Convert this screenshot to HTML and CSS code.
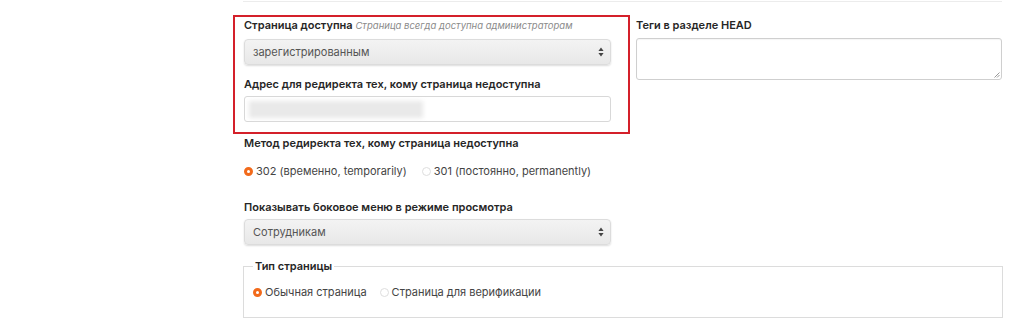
FILE: index.html
```html
<!DOCTYPE html>
<html lang="ru">
<head>
    <meta charset="UTF-8">
    <meta name="viewport" content="width=device-width, initial-scale=1.0">
    <title>Настройки страницы</title>
    <link rel="stylesheet" href="styles.css">
</head>
<body>
    <div class="page">
        <div class="topline"></div>
        <div class="form">
            <div class="col">
                <div class="highlight">
                    <div class="field">
                        <div class="label">Страница доступна <em class="hint">Страница всегда доступна администраторам</em></div>
                        <div class="select">
                            <span>зарегистрированным</span>
                            <svg class="arrows" width="6" height="10" viewBox="0 0 6 10"><path d="M3 0.5L5.6 4H0.4z M3 9.5L0.4 6H5.6z" fill="#444"/></svg>
                        </div>
                    </div>
                    <div class="field">
                        <div class="label">Адрес для редиректа тех, кому страница недоступна</div>
                        <div class="input"><span class="blurred"></span></div>
                    </div>
                </div>

                <div class="field after-box">
                    <div class="label">Метод редиректа тех, кому страница недоступна</div>
                    <div class="radios">
                        <label class="radio"><span class="dot checked"></span>302 (временно, temporarily)</label>
                        <label class="radio"><span class="dot"></span>301 (постоянно, permanently)</label>
                    </div>
                </div>

                <div class="field">
                    <div class="label">Показывать боковое меню в режиме просмотра</div>
                    <div class="select">
                        <span>Сотрудникам</span>
                        <svg class="arrows" width="6" height="10" viewBox="0 0 6 10"><path d="M3 0.5L5.6 4H0.4z M3 9.5L0.4 6H5.6z" fill="#444"/></svg>
                    </div>
                </div>
            </div>

            <div class="col right">
                <div class="label">Теги в разделе HEAD</div>
                <div class="textarea">
                    <svg class="grip" width="7" height="7" viewBox="0 0 7 7"><path d="M6.5 1.5L1.5 6.5 M6.5 4L4 6.5" stroke="#999" stroke-width="1"/></svg>
                </div>
            </div>
        </div>

        <fieldset class="type">
            <legend>Тип страницы</legend>
            <div class="radios">
                <label class="radio"><span class="dot checked"></span>Обычная страница</label>
                <label class="radio"><span class="dot"></span>Страница для верификации</label>
            </div>
        </fieldset>
    </div>
</body>
</html>
```

FILE: styles.css
```css
body {
    margin: 0;
    background: #fff;
    font-family: Inter, "Noto Sans", Arial, sans-serif;
    font-size: 11px;
    line-height: 14px;
    color: #333;
}

.page {
    margin-left: 243px;
    width: 760px;
    padding-top: 1px;
}

.topline {
    height: 1px;
    width: 759px;
    background: #ececec;
}

.form {
    display: grid;
    grid-template-columns: 367px 366px;
    column-gap: 25px;
    padding-left: 1px;
    margin-top: 13px;
}

.highlight {
    margin: 0 -19px 0 -11px;
    padding: 1px 17px 10px 9px;
    border: 2px solid #d4202a;
}

.highlight .field:first-child .label {
    margin-bottom: 6px;
}

.field + .field {
    margin-top: 12px;
}

.field.after-box {
    margin-top: 2px;
}

.field.after-box + .field {
    margin-top: 21px;
}

.label {
    font-weight: 600;
    color: #262626;
    margin-bottom: 5px;
    white-space: nowrap;
}

.hint {
    font-weight: 400;
    font-size: 9.5px;
    color: #8a8a8a;
}

.select {
    position: relative;
    display: flex;
    align-items: center;
    height: 26px;
    box-sizing: border-box;
    padding-left: 8px;
    border: 1px solid #dcdcdc;
    border-radius: 4px;
    background: linear-gradient(#f3f3f3, #e8e8e8);
    box-shadow: 0 1px 2px rgba(0,0,0,0.14);
    color: #555;
}

.arrows {
    position: absolute;
    right: 6px;
    top: 7px;
}

.input {
    height: 26px;
    box-sizing: border-box;
    border: 1px solid #d8d8d8;
    border-radius: 3px;
    background: #fff;
    padding: 4px 0 0 4px;
}

.blurred {
    display: block;
    width: 174px;
    height: 17px;
    background: #e9e9e9;
    filter: blur(2px);
}

.radios {
    display: flex;
    align-items: center;
    gap: 15px;
    height: 16px;
    color: #444;
}

.field .radios {
    margin-top: 13px;
}

.radio {
    display: flex;
    align-items: center;
    gap: 3px;
}

.dot {
    width: 9px;
    height: 9px;
    box-sizing: border-box;
    border-radius: 50%;
    border: 1px solid #dedede;
    background: #fff;
}

.dot.checked {
    border: 3px solid #f26a1b;
}

.right {
    padding-top: 3px;
}

.right .label {
    margin-bottom: 6px;
}

.textarea {
    position: relative;
    height: 42px;
    box-sizing: border-box;
    border: 1px solid #cfcfcf;
    border-radius: 3px;
    box-shadow: inset 0 1px 1px rgba(0,0,0,0.04);
}

.grip {
    position: absolute;
    right: 1px;
    bottom: 1px;
}

.type {
    margin: 14px 0 0;
    padding: 11px 9px 17px;
    border: 1px solid #dcdcdc;
}

.type legend {
    padding: 0 2px;
    font-weight: 600;
    color: #262626;
}

.type .radios {
    gap: 13px;
}
```
